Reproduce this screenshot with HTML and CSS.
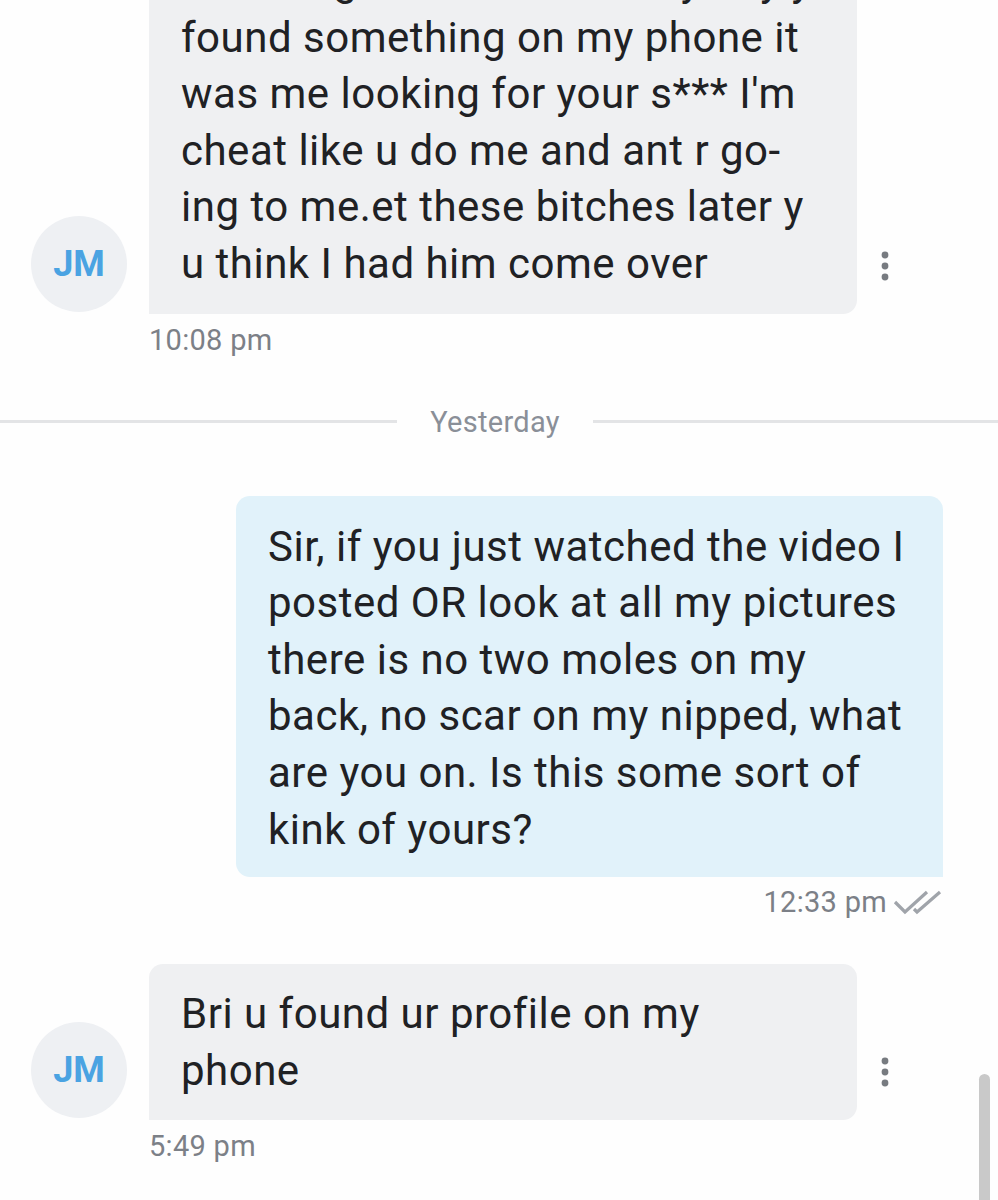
FILE: index.html
```html
<!DOCTYPE html>
<html lang="en">
	<head>
		<meta charset="utf-8" />
		<link rel="stylesheet" href="styles.css">
	</head>
	<body>
		<div id="thread" class="thread">
			<div class="msg in first">
				<div class="avatar">JM</div>
				<div class="bubble">
					then he got in there and my boy y<br />
					found something on my phone it<br />
					was me looking for your s*** I'm<br />
					cheat like u do me and ant r go-<br />
					ing to me.et these bitches later y<br />
					u think I had him come over
				</div>
				<button type="button" class="more" title="More">
					<svg class="icon-dots" viewBox="0 0 8 30">
						<circle cx="4" cy="4" r="3.4"/>
						<circle cx="4" cy="15" r="3.4"/>
						<circle cx="4" cy="26" r="3.4"/>
					</svg>
				</button>
			</div>
			<div class="time in-time">10:08 pm</div>

			<div class="day-divider">
				<span class="line"></span>
				<span class="day">Yesterday</span>
				<span class="line"></span>
			</div>

			<div class="msg out">
				<div class="bubble">
					Sir, if you just watched the video I<br />
					posted OR look at all my pictures<br />
					there is no two moles on my<br />
					back, no scar on my nipped, what<br />
					are you on. Is this some sort of<br />
					kink of yours?
				</div>
			</div>
			<div class="time out-time">
				<span>12:33 pm</span>
				<svg class="ticks" viewBox="0 0 50 28">
					<path d="M2 14l10 10L34 4" />
					<path d="M21 21l3 3L47 4" />
				</svg>
			</div>

			<div class="msg in">
				<div class="avatar">JM</div>
				<div class="bubble">
					Bri u found ur profile on my<br />
					phone
				</div>
				<button type="button" class="more" title="More">
					<svg class="icon-dots" viewBox="0 0 8 30">
						<circle cx="4" cy="4" r="3.4"/>
						<circle cx="4" cy="15" r="3.4"/>
						<circle cx="4" cy="26" r="3.4"/>
					</svg>
				</button>
			</div>
			<div class="time in-time">5:49 pm</div>
		</div>
		<div class="scrollbar"></div>
	</body>
</html>
```

FILE: styles.css
```css
html, body {
	margin: 0;
	padding: 0;
	background-color: #fefefe;
	overflow: hidden;
}

body {
	width: 998px;
	height: 1200px;
	font-family: Roboto, "Liberation Sans", sans-serif;
	color: #202124;
}

.thread {
	display: flex;
	flex-direction: column;
	margin-top: -69px;
}

.msg {
	display: flex;
	flex-direction: row;
	align-items: flex-end;
}

.msg.in {
	padding-left: 31px;
}

.msg.out {
	justify-content: flex-end;
	padding-right: 55px;
}

.avatar {
	width: 96px;
	height: 96px;
	margin-right: 22px;
	margin-bottom: 2px;
	border-radius: 50%;
	background-color: #eef0f3;
	color: #4aa3e2;
	font-size: 36px;
	font-weight: 700;
	display: flex;
	align-items: center;
	justify-content: center;
	flex-shrink: 0;
}

.bubble {
	font-size: 42px;
	line-height: 56.6px;
	letter-spacing: 0.5px;
	padding: 22px 10px 21px 32px;
	border-radius: 14px 14px 14px 0;
	white-space: nowrap;
	overflow: hidden;
}

.msg.in .bubble {
	width: 666px;
	background-color: #eff0f2;
}

.msg.out .bubble {
	width: 665px;
	padding-top: 23px;
	padding-bottom: 19px;
	background-color: #e1f2fa;
	border-radius: 14px 14px 0 14px;
}

.more {
	border: none;
	background: none;
	padding: 0;
	margin: 0 0 33px 24px;
	width: 8px;
	height: 30px;
	cursor: pointer;
}

.icon-dots {
	display: block;
	width: 8px;
	height: 30px;
	fill: #777b80;
}

.time {
	font-size: 29px;
	line-height: 34px;
	letter-spacing: 0.3px;
	color: #7c8087;
}

.in-time {
	padding-left: 149px;
	margin-top: 9px;
}

.out-time {
	display: flex;
	flex-direction: row;
	justify-content: flex-end;
	align-items: center;
	padding-right: 55px;
	margin-top: 8px;
	margin-bottom: 45px;
}

.ticks {
	width: 50px;
	height: 28px;
	margin-left: 6px;
	fill: none;
	stroke: #a0a4aa;
	stroke-width: 3.2;
}

.day-divider {
	display: flex;
	flex-direction: row;
	align-items: center;
	margin-top: 48px;
	margin-bottom: 57px;
}

.day-divider .line {
	height: 3px;
	background-color: #e3e4e6;
}

.day-divider .line:first-child {
	width: 397px;
}

.day-divider .line:last-child {
	flex-grow: 1;
}

.day {
	font-size: 29px;
	line-height: 34px;
	letter-spacing: 0.3px;
	color: #8a8f98;
	padding: 0 28px;
	width: 140px;
	text-align: center;
}

.scrollbar {
	position: absolute;
	left: 979px;
	top: 1074px;
	width: 11px;
	height: 140px;
	border-radius: 6px;
	background-color: #c9c9c9;
}
```
